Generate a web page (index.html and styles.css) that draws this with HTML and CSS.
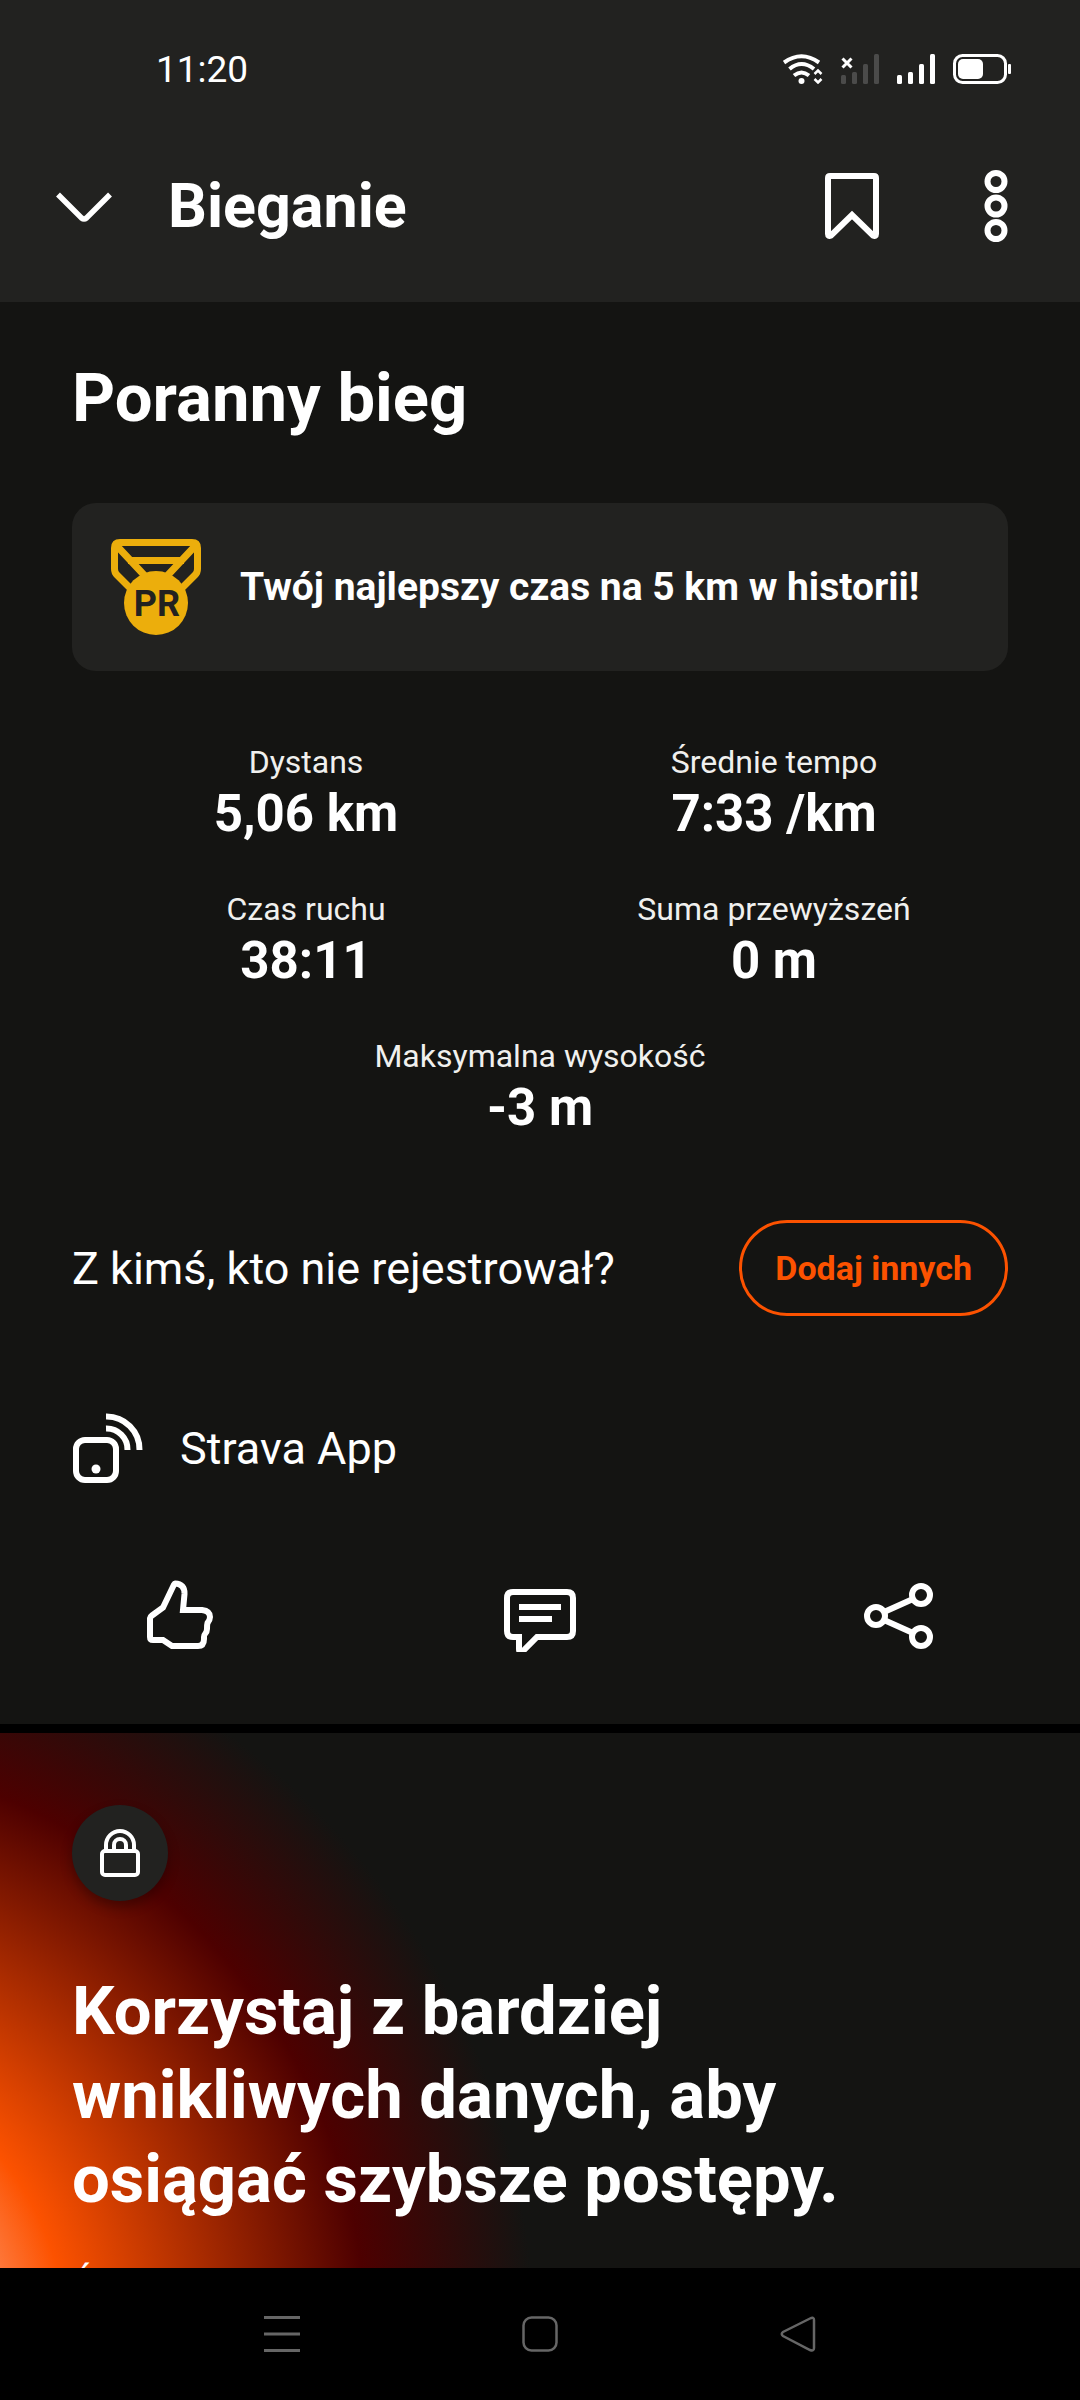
FILE: index.html
```
<!DOCTYPE html>
<html lang="pl">

<head>
    <meta charset="UTF-8">
    <meta name="viewport" content="width=device-width, initial-scale=1.0">
    <title>Bieganie</title>
    <link rel="stylesheet" href="styles.css">
</head>

<body>
    <header class="top">
        <div class="status">
            <span class="clock">11:20</span>
            <div class="status-icons">
                <svg width="40" height="30" viewBox="0 0 40 30" fill="none" stroke="currentColor">
                    <path d="M1 8.500Q18.500-4 36 8.500" stroke-width="4" />
                    <path d="M6.500 15Q18.500 5 31 15" stroke-width="4" />
                    <path d="M11 21.500Q18.500 15.500 26 21.500" stroke-width="4" />
                    <circle cx="18.500" cy="27" r="3" fill="currentColor" stroke="none" />
                    <path d="M31.500 20l3.500-3.500 3.500 3.500M31.500 25l3.500 3.500 3.500-3.500" stroke-width="2.500" />
                </svg>
                <svg width="38" height="30" viewBox="0 0 38 30">
                    <path d="M1.500 4.500l9 9M10.500 4.500l-9 9" stroke="currentColor" stroke-width="3" />
                    <g fill="#4b4b4a">
                        <rect x="0" y="21" width="5" height="9" rx="1.500" />
                        <rect x="11" y="18" width="5" height="12" rx="1.500" />
                        <rect x="22" y="10" width="5" height="20" rx="1.500" />
                        <rect x="33" y="0" width="5" height="30" rx="1.500" />
                    </g>
                </svg>
                <svg width="38" height="30" viewBox="0 0 38 30" fill="currentColor">
                    <rect x="0" y="21" width="5" height="9" rx="1.500" />
                    <rect x="11" y="18" width="5" height="12" rx="1.500" />
                    <rect x="22" y="10" width="5" height="20" rx="1.500" />
                    <rect x="33" y="0" width="5" height="30" rx="1.500" />
                </svg>
                <svg width="58" height="30" viewBox="0 0 58 30">
                    <rect x="1.500" y="1.500" width="51" height="27" rx="8" fill="none" stroke="currentColor" stroke-width="3" />
                    <rect x="5" y="5" width="25" height="20" rx="5" fill="currentColor" />
                    <rect x="55" y="10" width="3" height="10" rx="1" fill="currentColor" />
                </svg>
            </div>
        </div>
        <div class="appbar">
            <button class="icon-btn" aria-label="Zamknij">
                <svg width="56" height="32" viewBox="0 0 56 32" fill="none" stroke="currentColor" stroke-width="5.500">
                    <path d="M2 4.500l23.500 23.500q2.500 2 5 0L54 4.500" />
                </svg>
            </button>
            <h1>Bieganie</h1>
            <button class="icon-btn" aria-label="Zapisz">
                <svg width="54" height="66" viewBox="0 0 54 66" fill="none" stroke="currentColor" stroke-width="6">
                    <path d="M5 3H49Q51 3 51 5V61Q51 64 48 62.500L27 42L6 62.500Q3 64 3 61V5Q3 3 5 3Z" />
                </svg>
            </button>
            <button class="icon-btn" aria-label="Więcej">
                <svg width="24" height="72" viewBox="0 0 24 72" fill="none" stroke="currentColor" stroke-width="6">
                    <circle cx="12" cy="11.500" r="8.500" />
                    <circle cx="12" cy="36" r="8.500" />
                    <circle cx="12" cy="60.500" r="8.500" />
                </svg>
            </button>
        </div>
    </header>

    <main>
        <section class="activity">
            <h2>Poranny bieg</h2>
            <div class="best">
                <svg class="medal" width="90" height="96" viewBox="0 0 90 96">
                    <g fill="none" stroke="currentColor" stroke-width="7">
                        <path d="M20 50L6 36Q3.500 33.500 3.500 30V9Q3.500 3.500 9 3.500H81Q86.500 3.500 86.500 9V30Q86.500 33.500 84 36L70 50" />
                        <path d="M5 6L34 37M85 6L56 37M17 21.500H73" />
                    </g>
                    <circle cx="45" cy="64" r="32" fill="currentColor" />
                    <text x="46" y="77">PR</text>
                </svg>
                <p>Twój najlepszy czas na 5 km w historii!</p>
            </div>
            <dl class="stats">
                <div>
                    <dt>Dystans</dt>
                    <dd>5,06 km</dd>
                </div>
                <div>
                    <dt>Średnie tempo</dt>
                    <dd>7:33 /km</dd>
                </div>
                <div>
                    <dt>Czas ruchu</dt>
                    <dd>38:11</dd>
                </div>
                <div>
                    <dt>Suma przewyższeń</dt>
                    <dd>0 m</dd>
                </div>
                <div class="wide">
                    <dt>Maksymalna wysokość</dt>
                    <dd>-3 m</dd>
                </div>
            </dl>
            <div class="others">
                <p>Z kimś, kto nie rejestrował?</p>
                <button class="add">Dodaj innych</button>
            </div>
            <div class="device">
                <svg width="72" height="72" viewBox="0 0 72 72" fill="none" stroke="currentColor" stroke-width="6">
                    <rect x="4" y="28" width="40" height="40" rx="9" />
                    <circle cx="24" cy="57" r="4.500" fill="currentColor" stroke="none" />
                    <path d="M34 16.500A21 21 0 0 1 55.500 38M34 4.500A33 33 0 0 1 67.500 38" />
                </svg>
                <p>Strava App</p>
            </div>
        </section>
        <div class="actions">
            <button class="icon-btn" aria-label="Kudos">
                <svg width="72" height="72" viewBox="0 0 72 72" fill="none" stroke="currentColor" stroke-width="6">
                    <path d="M31 3.500Q41 4 40.500 14L39 30H58Q66 31 66 37Q66 40 63.500 43Q63 44.500 63 49Q63 52 61 54Q60 55 60 57V59Q60 66 54 66H28L19 60H9Q6 60 6 57V38Q6 37 8 35.500L19 27.500L30 4.500Q30.500 3.500 31 3.500Z" />
                </svg>
            </button>
            <button class="icon-btn" aria-label="Komentarze">
                <svg width="72" height="72" viewBox="0 0 72 72" fill="none" stroke="currentColor" stroke-width="6">
                    <path d="M9 12H63Q69 12 69 18V51Q69 57 63 57H33L19 71Q15 74 15 69V57H9Q3 57 3 51V18Q3 12 9 12Z" />
                    <path d="M15 27H57M15 39H48" />
                </svg>
            </button>
            <button class="icon-btn" aria-label="Udostępnij">
                <svg width="72" height="72" viewBox="0 0 72 72" fill="none" stroke="currentColor" stroke-width="6">
                    <circle cx="12" cy="36" r="9" />
                    <circle cx="57" cy="15" r="9" />
                    <circle cx="57" cy="57" r="9" />
                    <path d="M20 32L49 19M20 40L49 53" />
                </svg>
            </button>
        </div>
        <section class="premium">
            <div class="lock">
                <svg width="40" height="48" viewBox="0 0 40 48" fill="none" stroke="currentColor" stroke-width="4">
                    <rect x="2" y="22" width="36" height="24" rx="3" />
                    <path d="M6 22V16a14 14 0 0 1 28 0V22" />
                    <path d="M14 22V16a6 6 0 0 1 12 0V22" />
                </svg>
            </div>
            <h2>Korzystaj z bardziej wnikliwych danych, aby osiągać szybsze postępy.</h2>
            <p>Ś</p>
        </section>
    </main>

    <nav class="system">
        <button aria-label="Ostatnie">
            <svg width="36" height="36" viewBox="0 0 36 36" fill="none" stroke="currentColor" stroke-width="3">
                <path d="M0 1.500H36M0 18H36M0 34.500H36" />
            </svg>
        </button>
        <button aria-label="Ekran główny">
            <svg width="36" height="36" viewBox="0 0 36 36" fill="none" stroke="currentColor" stroke-width="2.500">
                <rect x="1.500" y="1.500" width="33" height="33" rx="8" />
            </svg>
        </button>
        <button aria-label="Wstecz">
            <svg width="36" height="36" viewBox="0 0 36 36" fill="none" stroke="currentColor" stroke-width="2.500">
                <path d="M30 2.500L3 16Q0.500 18 3 20L30 34Q34 35.500 34 32V4Q34 0.500 30 2.500Z" />
            </svg>
        </button>
    </nav>
</body>

</html>
```
FILE: styles.css
```
* {
    box-sizing: border-box;
}

body {
    display: flex;
    flex-direction: column;
    height: 100vh;
    margin: 0;
    background-color: black;
    color: #ffffff;
    font-family: Roboto, "Noto Sans", sans-serif;
}

h1,
h2,
p,
dl,
dd {
    margin: 0;
}

svg {
    display: block;
}

button {
    padding: 0;
    background: none;
    border: none;
    color: inherit;
    font-family: inherit;
    cursor: pointer;
}

/* top bars */
.top {
    background-color: #222220;
}

.status {
    display: flex;
    justify-content: space-between;
    align-items: center;
    height: 138px;
    padding: 0 69px 0 156px;
}

.clock {
    font-size: 37px;
}

.status-icons {
    display: flex;
    gap: 18px;
}

.appbar {
    display: flex;
    align-items: center;
    padding: 32px 72px 60px 56px;
}

.appbar h1 {
    flex: 1;
    margin-left: 56px;
    font-size: 61px;
    line-height: 72px;
}

.appbar h1 ~ .icon-btn + .icon-btn {
    margin-left: 105px;
}

/* activity */
main {
    flex: 1;
    min-height: 0;
    overflow: hidden;
}

.activity {
    padding: 54px 72px 96px;
    background-color: #141412;
}

h2 {
    font-size: 67px;
    line-height: 84px;
}

.best {
    display: flex;
    align-items: center;
    gap: 39px;
    margin-top: 63px;
    padding: 36px 39px;
    border-radius: 24px;
    background-color: #222220;
    font-size: 39px;
    font-weight: bold;
}

.medal {
    color: #ecae0c;
}

.medal text {
    fill: #222220;
    font-size: 36px;
    text-anchor: middle;
}

.stats {
    display: grid;
    grid-template-columns: 1fr 1fr;
    row-gap: 43px;
    margin-top: 69px;
    text-align: center;
}

.stats .wide {
    grid-column: span 2;
}

dt {
    color: #f0f0ee;
    font-size: 32px;
    line-height: 44px;
}

dd {
    font-size: 51px;
    font-weight: bold;
    line-height: 60px;
}

.others {
    display: flex;
    justify-content: space-between;
    align-items: center;
    margin-top: 82px;
    font-size: 45px;
}

.add {
    height: 96px;
    padding: 0 33px;
    border: 3px solid #fc5200;
    border-radius: 48px;
    color: #fc5200;
    font-size: 34px;
    font-weight: bold;
}

.device {
    display: flex;
    align-items: center;
    gap: 36px;
    margin-top: 96px;
    font-size: 45px;
}

.actions {
    display: grid;
    grid-template-columns: repeat(3, 1fr);
    justify-items: center;
    padding-bottom: 72px;
    border-bottom: 9px solid black;
    background-color: #141412;
}

/* subscription */
.premium {
    padding: 72px 72px 120px;
    background: radial-gradient(circle at -221px 607px, #ff9a70 180px, #fc5200 287px, #4d0000 587px, #141412 755px);
}

.lock {
    display: flex;
    justify-content: center;
    align-items: center;
    width: 96px;
    height: 96px;
    border-radius: 50%;
    background-color: #222220;
    box-shadow: 0 6px 12px rgba(0, 0, 0, 0.3);
}

.premium h2 {
    max-width: 800px;
    margin-top: 68px;
}

.premium p {
    margin-top: 40px;
    font-size: 38px;
    line-height: 48px;
}

/* system navigation */
.system {
    display: grid;
    grid-template-columns: repeat(3, 1fr);
    justify-items: center;
    align-items: center;
    height: 132px;
    padding: 0 153px;
    background-color: black;
}

.system button {
    color: #666666;
}
```
